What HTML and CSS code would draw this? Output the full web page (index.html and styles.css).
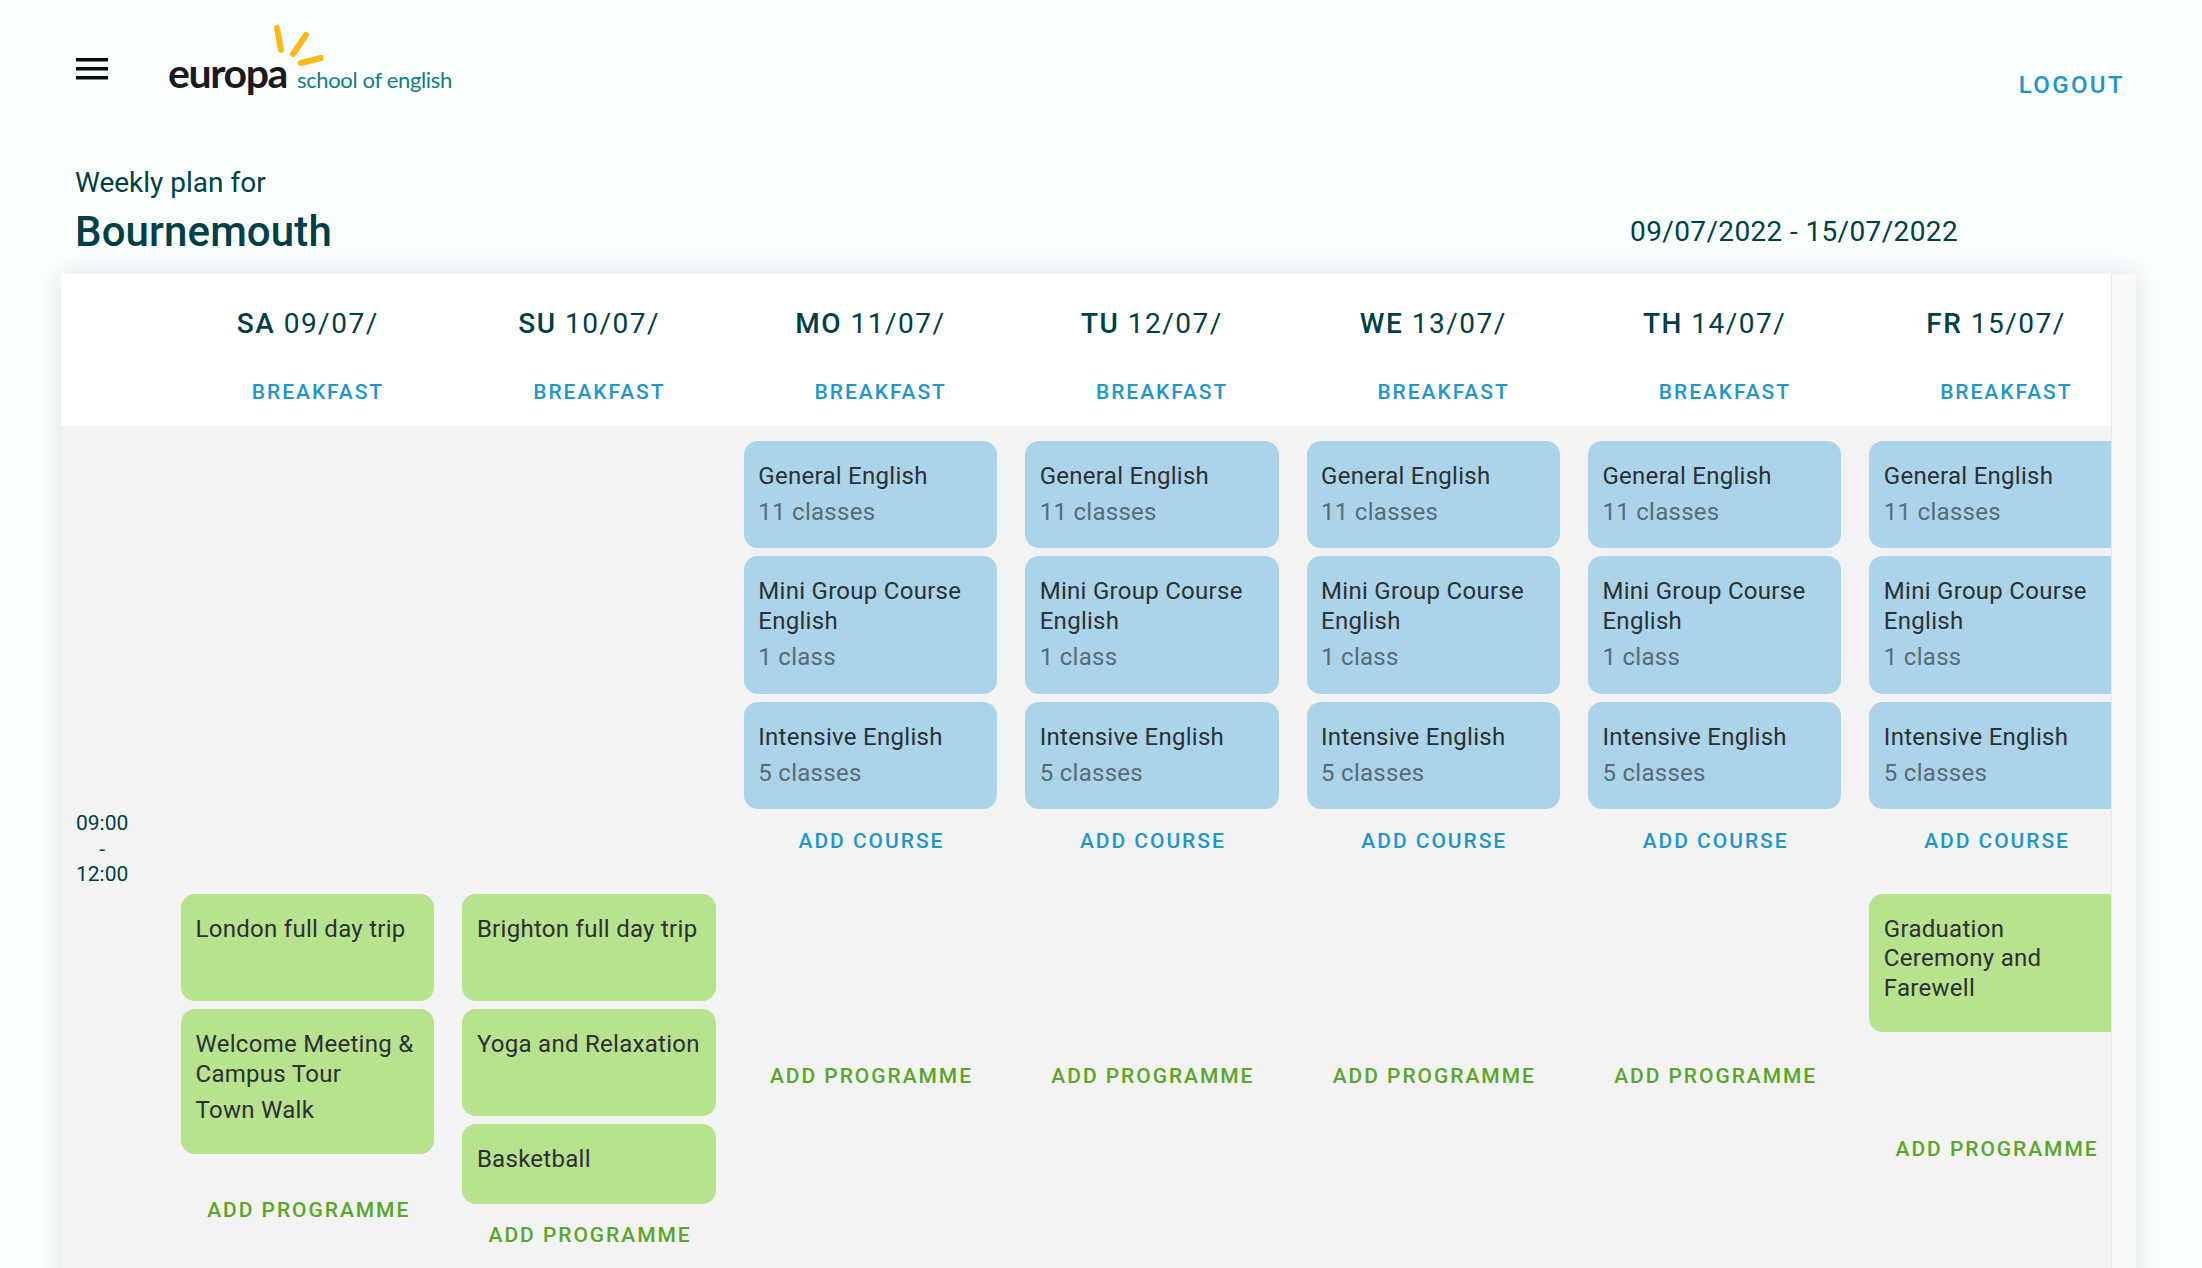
FILE: index.html
```html
<!DOCTYPE html>
<html lang="en">
<head>
<meta charset="utf-8">
<title>Weekly plan</title>
<link rel="stylesheet" href="styles.css">
</head>
<body>
<header class="topbar">
  <svg class="menu-icon" width="32" height="22" viewBox="0 0 32 22"><path d="M0 0h32v3.6H0zM0 9h32v3.6H0zM0 18h32v3.6H0z" fill="#0c0c0e"/></svg>
  <div class="logo">
    <svg class="rays" width="50" height="42" viewBox="0 0 50 42"><g stroke="#fdb913" stroke-width="6" stroke-linecap="round" fill="none"><path d="M4 3l4 22"/><path d="M20 29L33 10"/><path d="M28 38l20-5"/></g></svg>
    <span class="logo-main">europa</span>
    <span class="logo-sub">school of english</span>
  </div>
  <a class="logout">LOGOUT</a>
</header>
<section class="title-row">
  <div class="titles">
    <div class="plan-for">Weekly plan for</div>
    <h1 class="city">Bournemouth</h1>
  </div>
  <div class="range">09/07/2022 - 15/07/2022</div>
</section>
<main class="panel">
  <div class="viewport">
    <div class="cols head">
      <div></div>
      <div class="day"><div class="date"><b>SA</b> 09/07/</div><a class="breakfast">BREAKFAST</a></div>
      <div class="day"><div class="date"><b>SU</b> 10/07/</div><a class="breakfast">BREAKFAST</a></div>
      <div class="day"><div class="date"><b>MO</b> 11/07/</div><a class="breakfast">BREAKFAST</a></div>
      <div class="day"><div class="date"><b>TU</b> 12/07/</div><a class="breakfast">BREAKFAST</a></div>
      <div class="day"><div class="date"><b>WE</b> 13/07/</div><a class="breakfast">BREAKFAST</a></div>
      <div class="day"><div class="date"><b>TH</b> 14/07/</div><a class="breakfast">BREAKFAST</a></div>
      <div class="day"><div class="date"><b>FR</b> 15/07/</div><a class="breakfast">BREAKFAST</a></div>
    </div>
    <div class="cols body-grid">
      <div class="time">09:00<br>-<br>12:00</div>

      <div class="cell"></div>
      <div class="cell"></div>
      <div class="cell">
        <div class="card blue"><div class="name">General English</div><div class="sub">11 classes</div></div>
        <div class="card blue"><div class="name">Mini Group Course English</div><div class="sub">1 class</div></div>
        <div class="card blue"><div class="name">Intensive English</div><div class="sub">5 classes</div></div>
        <a class="add course">ADD COURSE</a>
      </div>
      <div class="cell">
        <div class="card blue"><div class="name">General English</div><div class="sub">11 classes</div></div>
        <div class="card blue"><div class="name">Mini Group Course English</div><div class="sub">1 class</div></div>
        <div class="card blue"><div class="name">Intensive English</div><div class="sub">5 classes</div></div>
        <a class="add course">ADD COURSE</a>
      </div>
      <div class="cell">
        <div class="card blue"><div class="name">General English</div><div class="sub">11 classes</div></div>
        <div class="card blue"><div class="name">Mini Group Course English</div><div class="sub">1 class</div></div>
        <div class="card blue"><div class="name">Intensive English</div><div class="sub">5 classes</div></div>
        <a class="add course">ADD COURSE</a>
      </div>
      <div class="cell">
        <div class="card blue"><div class="name">General English</div><div class="sub">11 classes</div></div>
        <div class="card blue"><div class="name">Mini Group Course English</div><div class="sub">1 class</div></div>
        <div class="card blue"><div class="name">Intensive English</div><div class="sub">5 classes</div></div>
        <a class="add course">ADD COURSE</a>
      </div>
      <div class="cell">
        <div class="card blue"><div class="name">General English</div><div class="sub">11 classes</div></div>
        <div class="card blue"><div class="name">Mini Group Course English</div><div class="sub">1 class</div></div>
        <div class="card blue"><div class="name">Intensive English</div><div class="sub">5 classes</div></div>
        <a class="add course">ADD COURSE</a>
      </div>

      <div class="cell">
        <div class="card green"><div class="name">London full day trip</div><div class="sub">&nbsp;</div></div>
        <div class="card green extra"><div class="name">Welcome Meeting &amp; Campus Tour</div><div class="sub dark">Town Walk</div></div>
        <a class="add programme">ADD PROGRAMME</a>
      </div>
      <div class="cell">
        <div class="card green"><div class="name">Brighton full day trip</div><div class="sub">&nbsp;</div></div>
        <div class="card green"><div class="name">Yoga and Relaxation</div><div class="sub">&nbsp;</div></div>
        <div class="card green extra"><div class="name">Basketball</div></div>
        <a class="add programme">ADD PROGRAMME</a>
      </div>
      <div class="cell"><a class="add programme">ADD PROGRAMME</a></div>
      <div class="cell"><a class="add programme">ADD PROGRAMME</a></div>
      <div class="cell"><a class="add programme">ADD PROGRAMME</a></div>
      <div class="cell"><a class="add programme">ADD PROGRAMME</a></div>
      <div class="cell">
        <div class="card green extra"><div class="name">Graduation Ceremony and Farewell</div></div>
        <a class="add programme">ADD PROGRAMME</a>
      </div>
    </div>
  </div>
  <div class="vbar"></div>
</main>
</body>
</html>
```
FILE: styles.css
```css
* { box-sizing: border-box; }
html, body { height: 1268px; overflow: hidden; }
body {
  margin: 0;
  background: #fbfeff;
  font-family: Roboto, "Liberation Sans", sans-serif;
  color: #004045;
}
.topbar {
  height: 140px;
  display: flex;
  align-items: flex-start;
  padding: 0 77px 0 76px;
}
.menu-icon { margin-top: 58px; flex: none; }
.logo {
  position: relative;
  margin-left: 60px;
  margin-top: 48px;
  display: flex;
  align-items: baseline;
  height: 50px;
}
.rays { position: absolute; left: 105px; top: -23px; }
.logo-main {
  font-family: Lato, sans-serif;
  font-size: 41px;
  font-weight: 700;
  line-height: 50px;
  color: #1b1a1f;
  letter-spacing: -1.4px;
}
.logo-sub {
  font-family: Lato, sans-serif;
  font-size: 22px;
  color: #11807f;
  margin-left: 10px;
  letter-spacing: -0.35px;
}
.logout {
  margin-left: auto;
  margin-top: 72px;
  font-size: 24px;
  line-height: 26px;
  font-weight: 500;
  letter-spacing: 2.4px;
  color: #1e96cd;
}
.title-row {
  display: flex;
  align-items: flex-end;
  padding: 0 244px 0 75px;
  height: 134px;
}
.titles { padding-top: 25px; height: 134px; }
.plan-for { font-size: 28px; line-height: 36px; }
.city { margin: 5px 0 0; font-size: 42px; line-height: 52px; font-weight: 500; letter-spacing: 0.12px; }
.range { margin-left: auto; font-size: 28px; line-height: 36px; margin-bottom: 24px; letter-spacing: 0.36px; }
.panel {
  margin-left: 61px;
  width: 2075px;
  height: 1100px;
  display: flex;
  background: #fff;
  box-shadow: 0 0 24px rgba(0, 40, 50, 0.12);
}
.viewport { flex: 1; min-width: 0; overflow: hidden; }
.vbar { width: 25px; flex: none; background: #fafafa; border-left: 1px solid #e8e8e8; }
.cols {
  display: grid;
  width: 2076px;
  grid-template-columns: 106px repeat(7, 281.4px);
}
.head { height: 152px; background: #fff; }
.day { text-align: center; padding: 0 14px; }
.date { margin-top: 33px; font-size: 28px; line-height: 34px; letter-spacing: 1.5px; }
.date b { font-weight: 500; }
.breakfast {
  display: block;
  margin-top: 39px;
  padding-left: 20.5px;
  font-size: 21px;
  line-height: 24px;
  font-weight: 500;
  letter-spacing: 1.95px;
  color: #1e96cd;
}
.body-grid {
  background: #f3f3f3;
  padding: 15px 0 0;
  grid-template-rows: auto auto;
  row-gap: 28.6px;
  width: 2076px;
  min-height: 1000px;
  align-content: start;
}
.time {
  grid-row: 1 / 3;
  align-self: center;
  justify-self: start;
  margin-left: 15px;
  font-size: 21px;
  line-height: 25.5px;
  text-align: center;
}
.cell { display: flex; flex-direction: column; padding: 0 14px; }
.card { border-radius: 14px; padding: 21px 14px 20.5px 14.5px; margin-bottom: 8px; }
.card.extra { padding-bottom: 28.5px; }
.blue { background: #abd4ea; }
.green { background: #b7e28e; }
.name { font-size: 24px; line-height: 29.7px; color: #2d3032; letter-spacing: 0.28px; }
.sub { font-size: 24px; line-height: 29.7px; margin-top: 6.5px; color: #5a6b75; letter-spacing: 0.28px; }
.sub.dark { color: #2d3032; }
.add {
  flex: 1;
  min-height: 46px;
  display: flex;
  align-items: center;
  justify-content: center;
  padding-left: 2px;
  font-size: 21px;
  font-weight: 500;
  letter-spacing: 1.95px;
}
.course { color: #1e96cd; min-height: 48px; }
.programme { color: #5aa628; }
```
